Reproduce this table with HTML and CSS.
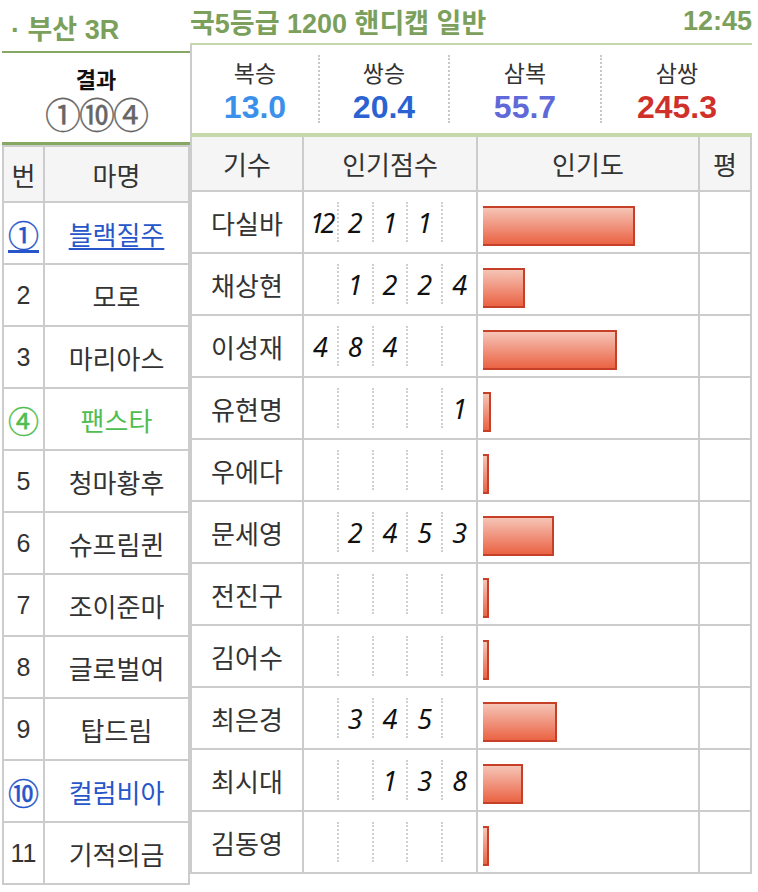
FILE: index.html
```html
<!DOCTYPE html>
<html lang="ko">
<head>
<meta charset="utf-8">
<title>부산 3R</title>
<link rel="stylesheet" href="styles.css">
</head>
<body>
<div class="page">
  <div class="left">
    <div class="left-head"><span class="dot">·</span>&nbsp;부산 3R</div>
    <div class="result">
      <div class="result-label">결과</div>
      <div class="result-nums">①⑩④</div>
    </div>
    <div class="horse-grid">
      <div class="cell head">번</div><div class="cell head">마명</div>
      <div class="cell circ blue"><a class="link">①</a></div><div class="cell blue"><a class="link">블랙질주</a></div>
      <div class="cell num">2</div><div class="cell">모로</div>
      <div class="cell num">3</div><div class="cell">마리아스</div>
      <div class="cell circ green">④</div><div class="cell green">팬스타</div>
      <div class="cell num">5</div><div class="cell">청마황후</div>
      <div class="cell num">6</div><div class="cell">슈프림퀸</div>
      <div class="cell num">7</div><div class="cell">조이준마</div>
      <div class="cell num">8</div><div class="cell">글로벌여</div>
      <div class="cell num">9</div><div class="cell">탑드림</div>
      <div class="cell circ blue">⑩</div><div class="cell blue">컬럼비아</div>
      <div class="cell num">11</div><div class="cell">기적의금</div>
    </div>
  </div>
  <div class="right">
    <div class="title"><span>국5등급 1200 핸디캡 일반</span><span>12:45</span></div>
    <div class="odds">
      <div class="odd w1"><div class="odd-label">복승</div><div class="odd-val c1">13.0</div></div>
      <div class="odd w2"><div class="odd-label">쌍승</div><div class="odd-val c2">20.4</div></div>
      <div class="odd w3"><div class="odd-label">삼복</div><div class="odd-val c3">55.7</div></div>
      <div class="odd w3"><div class="odd-label">삼쌍</div><div class="odd-val c4">245.3</div></div>
    </div>
    <div class="jgrid">
      <div class="cell head">기수</div><div class="cell head">인기점수</div><div class="cell head">인기도</div><div class="cell head">평</div>

      <div class="cell">다실바</div>
      <div class="cell scores"><span class="sc tight">12</span><span class="sc">2</span><span class="sc">1</span><span class="sc">1</span><span class="sc"></span></div>
      <div class="cell pop"><div class="bar" style="width:152px"></div></div>
      <div class="cell"></div>

      <div class="cell">채상현</div>
      <div class="cell scores"><span class="sc"></span><span class="sc">1</span><span class="sc">2</span><span class="sc">2</span><span class="sc">4</span></div>
      <div class="cell pop"><div class="bar" style="width:42px"></div></div>
      <div class="cell"></div>

      <div class="cell">이성재</div>
      <div class="cell scores"><span class="sc">4</span><span class="sc">8</span><span class="sc">4</span><span class="sc"></span><span class="sc"></span></div>
      <div class="cell pop"><div class="bar" style="width:134px"></div></div>
      <div class="cell"></div>

      <div class="cell">유현명</div>
      <div class="cell scores"><span class="sc"></span><span class="sc"></span><span class="sc"></span><span class="sc"></span><span class="sc">1</span></div>
      <div class="cell pop"><div class="bar" style="width:8px"></div></div>
      <div class="cell"></div>

      <div class="cell">우에다</div>
      <div class="cell scores"><span class="sc"></span><span class="sc"></span><span class="sc"></span><span class="sc"></span><span class="sc"></span></div>
      <div class="cell pop"><div class="bar" style="width:6px"></div></div>
      <div class="cell"></div>

      <div class="cell">문세영</div>
      <div class="cell scores"><span class="sc"></span><span class="sc">2</span><span class="sc">4</span><span class="sc">5</span><span class="sc">3</span></div>
      <div class="cell pop"><div class="bar" style="width:71px"></div></div>
      <div class="cell"></div>

      <div class="cell">전진구</div>
      <div class="cell scores"><span class="sc"></span><span class="sc"></span><span class="sc"></span><span class="sc"></span><span class="sc"></span></div>
      <div class="cell pop"><div class="bar" style="width:6px"></div></div>
      <div class="cell"></div>

      <div class="cell">김어수</div>
      <div class="cell scores"><span class="sc"></span><span class="sc"></span><span class="sc"></span><span class="sc"></span><span class="sc"></span></div>
      <div class="cell pop"><div class="bar" style="width:6px"></div></div>
      <div class="cell"></div>

      <div class="cell">최은경</div>
      <div class="cell scores"><span class="sc"></span><span class="sc">3</span><span class="sc">4</span><span class="sc">5</span><span class="sc"></span></div>
      <div class="cell pop"><div class="bar" style="width:74px"></div></div>
      <div class="cell"></div>

      <div class="cell">최시대</div>
      <div class="cell scores"><span class="sc"></span><span class="sc"></span><span class="sc">1</span><span class="sc">3</span><span class="sc">8</span></div>
      <div class="cell pop"><div class="bar" style="width:40px"></div></div>
      <div class="cell"></div>

      <div class="cell">김동영</div>
      <div class="cell scores"><span class="sc"></span><span class="sc"></span><span class="sc"></span><span class="sc"></span><span class="sc"></span></div>
      <div class="cell pop"><div class="bar" style="width:6px"></div></div>
      <div class="cell"></div>
    </div>
  </div>
</div>
</body>
</html>
```

FILE: styles.css
```css
body {
  margin: 0;
  background: #fff;
  font-family: "Liberation Sans", "Noto Sans CJK KR", sans-serif;
  color: #333;
}

.page {
  display: flex;
  align-items: flex-start;
  padding-left: 2px;
  width: 750px;
}

.left {
  width: 188px;
  flex: none;
}

.left-head {
  height: 45px;
  padding: 0 0 6px 9px;
  border-bottom: 2px solid #86a862;
  display: flex;
  align-items: flex-end;
  color: #7ba05b;
  font-weight: bold;
  font-size: 27px;
  line-height: 30px;
}

.result {
  height: 74px;
  padding-top: 15px;
  border-bottom: 3px solid #86a862;
  display: flex;
  flex-direction: column;
  align-items: center;
}

.result-label {
  font-size: 22px;
  line-height: 26px;
  font-weight: bold;
  color: #111;
}

.result-nums {
  margin-top: 4px;
  font-size: 36px;
  line-height: 38px;
  letter-spacing: -2px;
  color: #666;
  -webkit-text-stroke: 0.3px #666;
}

.horse-grid {
  display: grid;
  grid-template-columns: 39px 143px;
  grid-template-rows: 54px;
  grid-auto-rows: 60px;
  gap: 2px;
  padding: 2px;
  background: #cccccc;
}

.cell {
  background: #fff;
  display: flex;
  align-items: center;
  justify-content: center;
  font-size: 26px;
  color: #333;
}

.head {
  background: #f5f5f5;
}

.num {
  font-size: 25px;
}

.circ {
  font-size: 31px;
  -webkit-text-stroke: 0.4px currentColor;
}

.blue {
  color: #2656c9;
}

.green {
  color: #4fbd4f;
}

.link {
  color: inherit;
  text-decoration: underline;
  text-underline-offset: 3px;
}

.right {
  width: 562px;
  flex: none;
}

.title {
  height: 43px;
  border-bottom: 2px solid #c5d8ab;
  display: flex;
  justify-content: space-between;
  align-items: center;
  font-size: 27px;
  font-weight: bold;
  color: #7ba05b;
}

.odds {
  height: 88px;
  border-left: 2px solid #cccccc;
  border-bottom: 4px solid #c5d8ab;
  display: flex;
  align-items: center;
}

.odd {
  height: 68px;
  box-sizing: border-box;
  padding-top: 8px;
  display: flex;
  flex-direction: column;
  align-items: center;
}

.odd + .odd {
  border-left: 2px dotted #c8c8c8;
}

.w1 { width: 126px; }
.w2 { width: 130px; }
.w3 { width: 152px; }

.odd-label {
  font-size: 23px;
  line-height: 22px;
  color: #333;
}

.odd-val {
  margin-top: 4px;
  font-size: 32px;
  line-height: 36px;
  font-weight: bold;
}

.c1 { color: #3a90ea; }
.c2 { color: #2a62d2; }
.c3 { color: #5f69d9; }
.c4 { color: #d0302a; }

.jgrid {
  display: grid;
  grid-template-columns: 110px 172px 220px 50px;
  grid-template-rows: 53px;
  grid-auto-rows: 60px;
  gap: 2px;
  padding: 0 2px 2px;
  background: #cccccc;
}

.scores {
  justify-content: stretch;
}

.sc {
  flex: 1;
  height: 40px;
  display: flex;
  align-items: center;
  justify-content: center;
  font-family: "Noto Sans", "DejaVu Sans", sans-serif;
  font-style: italic;
  font-size: 27px;
  color: #111;
}

.sc + .sc {
  border-left: 2px dotted #cfcfcf;
}

.tight {
  letter-spacing: -4px;
}

.pop {
  justify-content: flex-start;
  padding: 8px 0 0 5px;
}

.bar {
  height: 40px;
  box-sizing: border-box;
  border: 2px solid #c63f28;
  border-left: 0;
  background: linear-gradient(#f6c4b6, #ea6344);
}
```
